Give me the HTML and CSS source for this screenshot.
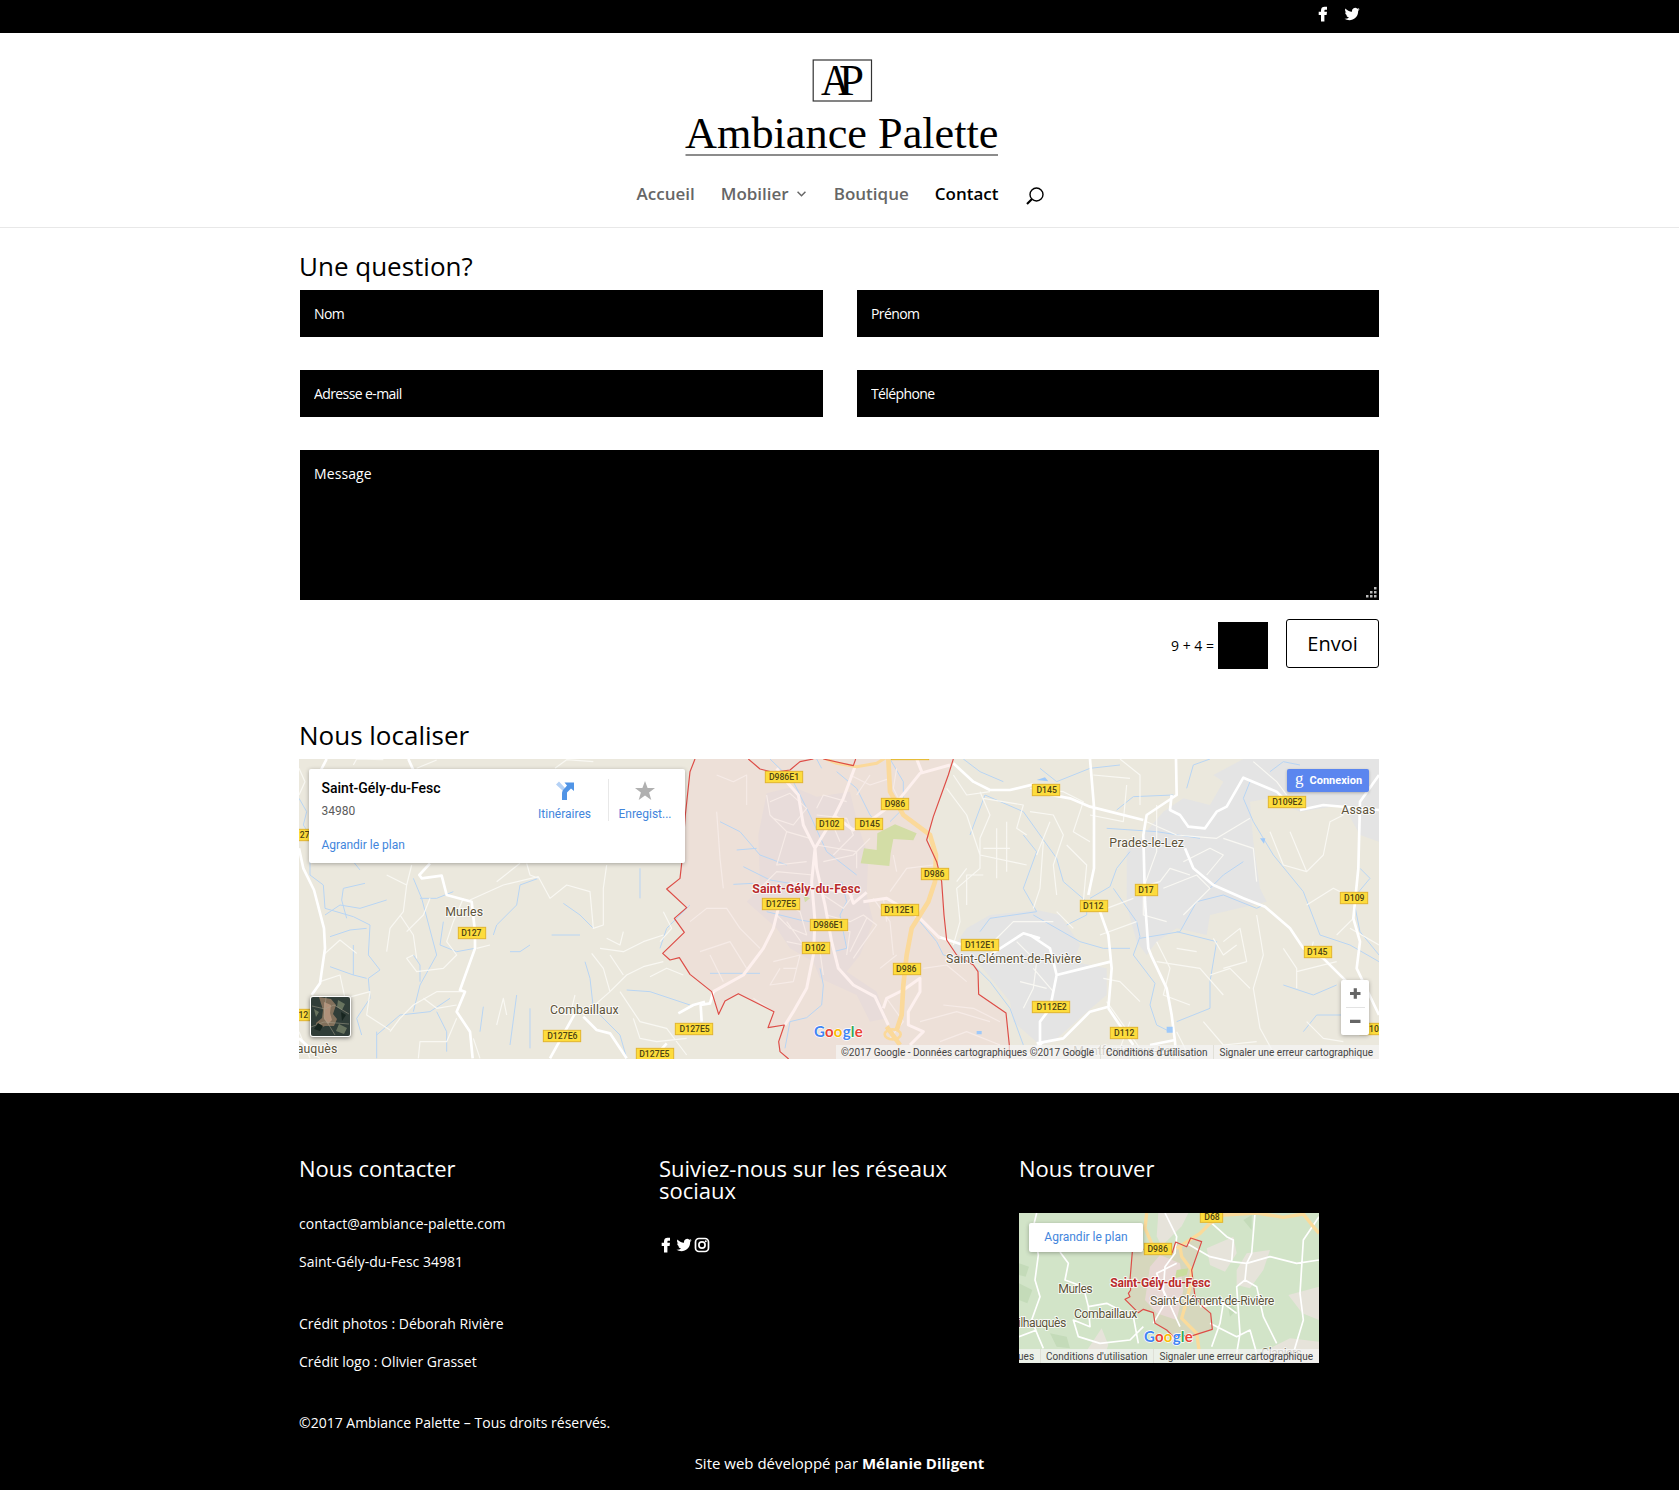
FILE: index.html
```html
<!DOCTYPE html>
<html lang="fr">
<head>
<meta charset="utf-8">
<title>Contact | Ambiance Palette</title>
<link rel="stylesheet" href="styles.css">
</head>
<body>
<svg class="defs" aria-hidden="true">
  <symbol id="facebook" viewBox="0 0 16 16"><path d="M6 15.500V9H3.700V5.800H6V4.200C6 1.800 7.500.7 9.500.7h2.500v3.100h-1.600c-.8 0-1 .4-1 1.100v.9H12L11.600 9H9.400v6.500z"/></symbol>
  <symbol id="twitter" viewBox="0 0 24 24"><path d="M23.600 4.900c-.8.400-1.700.6-2.700.8 1-.6 1.700-1.500 2-2.600-.9.500-1.900.9-2.900 1.100a4.700 4.700 0 0 0-8 4.300C8 8.300 4.500 6.400 2.200 3.600c-1.200 2.100-.6 4.800 1.500 6.200-.8 0-1.500-.2-2.100-.6 0 2.300 1.600 4.300 3.800 4.700-.7.200-1.400.2-2.100.1.600 1.900 2.300 3.200 4.400 3.200A9.500 9.500 0 0 1 .7 19.200c7.600 4.600 20.600 1.600 20.600-11.900.9-.7 1.700-1.500 2.300-2.400z"/></symbol>
  <symbol id="instagram" viewBox="0 0 16 16"><rect x="1.500" y="1.500" width="13" height="13" rx="3.500" fill="none" stroke="currentColor" stroke-width="1.700"/><circle cx="8" cy="8" r="3.100" fill="none" stroke="currentColor" stroke-width="1.700"/><circle cx="11.800" cy="4.200" r="1"/></symbol>
</svg>

<div class="topbar"><div class="topbar-icons">
  <svg class="social"><use href="#facebook"/></svg>
  <svg class="social"><use href="#twitter"/></svg>
</div></div>

<header class="header">
  <svg class="logo" width="320" height="104" viewBox="682 56 320 104">
    <rect x="813.200" y="60" width="58.300" height="41" fill="none" stroke="#333" stroke-width="1.200"/>
    <text class="logo-text" x="821" y="95.300" font-size="45" textLength="29" lengthAdjust="spacingAndGlyphs">A</text>
    <text class="logo-text" x="839" y="95.300" font-size="45" textLength="25" lengthAdjust="spacingAndGlyphs">P</text>
    <text class="logo-text" x="685" y="148" font-size="45" textLength="313.500" lengthAdjust="spacingAndGlyphs">Ambiance Palette</text>
    <path d="M685.500 155h312.500" stroke="#666" stroke-width="1.700"/>
  </svg>
  <nav class="nav">
    <a>Accueil</a>
    <a>Mobilier<svg class="chevron" viewBox="0 0 8 5"><path d="M.5.5 4 4 7.500.5" fill="none" stroke="#666" stroke-width="1.300"/></svg></a>
    <a>Boutique</a>
    <a class="active">Contact</a>
    <svg class="search" viewBox="0 0 18 18"><g fill="none" stroke="#000"><circle cx="10.500" cy="7.500" r="6.500" stroke-width="1.400"/><path d="M6 12 1 17" stroke-width="2.200"/></g></svg>
  </nav>
</header>

<main class="container">
  <h1 class="title">Une question?</h1>
  <form class="form">
    <input class="field" type="text" placeholder="Nom">
    <input class="field" type="text" placeholder="Prénom">
    <input class="field" type="text" placeholder="Adresse e-mail">
    <input class="field" type="text" placeholder="Téléphone">
    <div class="message">
      <textarea class="field area" placeholder="Message"></textarea>
      <svg class="grip" viewBox="0 0 11 11"><path d="M8 0h2.500v2.500H8zM4 4h2.500v2.500H4zM8 4h2.500v2.500H8zM0 8h2.500v2.500H0zM4 8h2.500v2.500H4zM8 8h2.500v2.500H8z"/></svg>
    </div>
    <div class="submit-row">
      <span class="sum">9 + 4 =</span>
      <input class="captcha" type="text" aria-label="Captcha">
      <button class="submit" type="button">Envoi</button>
    </div>
  </form>

  <h1 class="title locate">Nous localiser</h1>
  <section class="map">
    <svg class="map-art" viewBox="0 0 1080 300">
      <g transform="translate(391 -4) scale(.333333)">
        <!-- built-up areas -->
        <g fill="#e4e4e4">
          <path d="M830 520 900 480 1040 465 1110 480 1170 570 1150 620 1250 640 1250 720 1180 780 1090 860 1050 870 970 800 960 740 870 630 780 590z"/>
          <path d="M1310 290 1360 240 1420 170 1480 130 1560 150 1600 80 1570 60 1660 12H2067V140L2067 260 2010 240 1960 150 1830 170 1740 130 1680 140 1690 260 1710 400 1730 440 1560 480 1550 540 1460 520 1400 560 1370 600 1340 560 1310 450z"/>
        </g>
        <!-- commune -->
        <path fill="#ede0d8" d="M15 12 0 50-14 180-25 325-30 370-70 402-10 458-47 490-17 532-82 595-60 615-32 608 0 658 65 710 86 778 105 738 145 716 252 770 234 818 283 810 266 860 270 890 296 912H958L958 870 948 774 866 718 864 650 850 630 800 600 770 555 762 480 755 380 740 320 710 255 730 185 775 60 790 12z"/>
        <path fill="#e8dcda" d="M230 115 310 95 380 125 480 110 505 215 535 300 530 420 550 500 510 600 470 650 560 710 590 790 540 800 500 720 390 670 370 620 300 580 260 520 170 440 210 400 205 240z"/>
        <path fill="#d3dda6" d="M512 325 522 280 560 285 562 235 615 208 680 235 670 256 610 252 602 295 598 333zM340 420l20 10-15 12z"/>
        <!-- streams -->
        <g class="stream">
          <path d="M240 12 310 80 360 180 410 290 500 360M90 200 150 230 210 300 290 330M140 285 200 280M160 335 240 375 300 385M130 388 190 385M60 655 210 655M230 470 330 495 360 500M390 640 400 690 395 750 350 788 300 800 285 880M440 50 500 100 540 180 570 215M600 12 640 80 640 160 600 200M455 380 470 440 450 480 470 580 430 590M380 12 395 40M690 500 740 560 760 600 840 620 900 680 960 760 1000 870"/>
          <path d="M820 12 870 50 940 80M840 240 885 120 1000 170 1100 310 1120 380 1190 440 1190 480 1130 510M1000 240 1040 290 1000 400 1040 470 900 490 870 530"/>
          <path d="M1200 430 1260 395 1280 340 1320 290M1270 400 1340 500 1350 545 1330 600 1395 685 1380 750 1400 810 1440 830M1350 550 1470 530 1520 440 1600 420 1700 460 1720 450M1460 530 1580 560 1560 680 1560 760 1460 800M1030 480 1170 560 1240 580 1320 580M1050 40 1100 80 1200 40 1290 30M1280 165 1330 125 1450 120M1250 220 1400 230 1530 250M1490 100 1510 30 1560 12M1680 80 1660 130 1690 200 1750 300 1840 410 1890 540 1980 570 2067 620M1560 400 1600 360 1660 320M1740 50 1780 20 1830 30M2067 600 2010 530 1990 430 2040 370 2010 340M1780 690 1870 720 1940 690M1840 830 1880 780 1970 780"/>
        </g>
        <g class="stream" transform="translate(-1200 -120)">
          <path d="M27 250 50 290 40 330 60 360 60 480 100 510 105 580 190 605 240 630 235 720 270 765 235 790 240 850 200 910 215 960M170 610 155 555 160 520 225 505M105 600 150 570 210 580 290 555M120 665 180 645 230 640M120 755 190 780 230 790M190 780 190 690M370 490 395 550 440 720 390 810 370 890M390 550 440 550 490 530M370 720 390 750 390 800M460 620 450 690 500 710 555 700M260 960 330 900 420 890 480 850M440 890 470 950 470 1010M610 660 620 630 680 570 690 510 745 490M820 565 870 600 910 640M785 660 870 660M660 710 690 710 720 690M885 740 900 790 910 880 990 960 1010 1030M1010 825 1080 830 1200 870M1050 460 1050 550M1200 570 1130 640 1110 700M570 950 580 875M660 990 680 840M720 1000 720 880M260 950 260 1030M190 440 210 465"/>
        </g>
        <!-- minor roads -->
        <g class="lane" transform="translate(-1200 -120)">
          <path d="M27 160 45 200 27 240M190 150 200 132 280 134M380 160 440 135M795 160 830 134 910 140M365 450 350 510 290 480M350 510 340 590 300 640 290 710M330 600 370 660 380 730M420 550 400 600 350 650M100 720 150 675 200 715M90 800 150 780 165 850 240 830 230 900 300 945M300 950 330 910 370 870 440 830 520 830M385 1030 390 980 470 980 500 910M540 555 640 510 745 485 780 550 830 510 900 530 910 640 940 630 940 520 950 450M710 445 720 480 745 490M690 445 620 500M520 550 490 620 470 680 500 720 460 760 380 770 350 730 370 720M560 700 600 690M880 900 960 830 1010 780 1060 755 1120 740M960 830 940 760 905 715M930 700 1000 710 1060 680 1120 660M1000 780 960 720M1030 910 1050 970 1100 980 1190 970M990 830 1050 920 1130 940 1190 1020M1080 785 1130 760 1180 780M855 840 840 900M400 850 440 880 500 870M570 1030 550 970M620 930 640 850 650 900M1000 650 990 690 950 670M1120 590 1145 640 1110 680M830 900 780 880M27 950 60 1030M90 1030 40 1000"/>
        </g>
        <g class="lane">
          <path d="M870 110 900 180 870 250 870 340 800 400 810 500 790 570M880 130 1000 150 980 220 1010 240M790 60 830 120 900 110M920 220 920 370M950 200 950 350M870 300 1010 330M770 100 830 180 870 300M800 380 830 340M830 450 830 360 880 360M880 280 960 280"/>
          <path d="M1020 100 1120 110 1180 140 1150 230 1200 260M1020 170 1090 180 1120 240 1090 330 1100 420M1040 300 1080 200M1130 270 1190 330 1180 440M1060 260 1050 400 1030 460M1200 180 1300 200 1310 90M1210 60 1320 70M1290 12 1350 60 1350 150M1340 400 1410 380 1440 340 1500 360M1370 200 1460 240 1580 250 1680 190M1400 150 1400 290 1360 400 1360 480 1430 500M1480 320 1560 280 1600 300 1550 360M1420 400 1520 360 1560 400 1480 480M1600 250 1690 280 1700 380M1250 460 1330 430M1230 540 1340 500M1400 560 1440 640 1420 720 1500 750M1400 620 1530 640 1600 720M1560 660 1620 640 1680 700M1600 560 1650 520 1670 620 1600 640M1700 480 1720 600 1690 700 1710 820 1760 910M1740 230 1780 330 1850 350M1690 20 1760 80 1790 120M1800 230 1850 350 1900 300 1920 200 1960 180M1850 450 1930 400 1970 420M1780 580 1820 640 1820 700M1820 650 1940 620M1870 560 1860 600M1940 540 1990 490M1350 740 1290 680 1240 670M1320 800 1290 880M1460 830 1500 910M1540 800 1600 870 1700 860M1250 740 1350 880M1570 550 1600 600 1640 570M1460 580 1520 590M1980 520 2067 570M1850 800 1900 850 1960 860"/>
          <path d="M980 560 1040 620 1030 700 1000 760M1100 470 1150 520M1030 640 1090 710M990 680 1070 700M900 570 970 500 1090 500"/>
        </g>
        <g class="lane pink">
          <path d="M80 60 130 80 170 60 170 150M80 170 90 310 100 400M0 500 50 460 110 460 150 520 210 580M30 590 120 560 170 640M60 600 100 680M230 120 240 180 290 230 360 250M240 140 300 115 350 160 310 210 250 190M290 230 260 330 350 320M380 160 400 120 470 140M380 180 470 190 490 240 430 300M400 320 490 300 540 250M380 270 500 290 500 340M420 190 450 260M210 400 260 350 370 360M280 440 330 470 350 540 300 520 260 480M290 500 340 570 290 560M370 400 300 380M400 420 460 460 490 420M410 480 480 500 520 480 560 510 510 580 490 610M530 490 480 590M420 520 480 530 470 600M550 430 600 500 610 600M580 430 590 500M620 40 610 100 630 140M540 60 500 120M480 60 540 90 600 70M600 410 650 340 730 330M610 300 620 350M250 620 330 600 310 680 240 690 270 640M280 640 320 640M390 590 400 660M190 730 250 770M590 730 640 800 600 850M700 640 770 630 830 680M760 750 850 760 930 800M690 800 800 770 900 800M750 860 830 830 930 870M570 640 620 600"/>
        </g>
        <!-- main roads -->
        <g class="road">
          <g transform="translate(-1200 -120)"><path d="M110 132 85 180M27 400 40 460 72 525 102 640 105 700 90 805 65 840M355 132 370 165M420 445 388 480 395 490 455 482 470 540 545 560 555 650 555 700 510 825 525 830 500 890 540 950 548 1030M855 895 780 1030M880 905 920 945 960 955 1010 1030M27 970 60 1000M1130 985 1090 1030M1245 860 1210 870 1165 895"/></g>
          <path d="M790 25 850 80 900 105 960 105 1030 88M1030 110 1140 130 1200 155 1360 195M1200 12 1212 155 1212 340 1195 420M1458 12 1460 120 1370 180 1360 240 1365 440 1375 580 1385 605 1430 700 1445 780 1455 860 1458 910M1445 120 1440 165 1470 180 1495 215 1545 220 1580 170 1610 155 1660 68 1760 110 1790 140M1830 165 1900 150 2067 165M2067 60 2010 140 2005 340 1990 490 2010 560 2000 640 2067 780M1485 280 1510 340 1570 390 1660 430 1725 455 1800 520 1840 580 1900 610 1970 680M1230 470 1255 540 1265 640 1255 760M1262 620 1180 640 1100 660M1020 540 1080 580 1100 660 1080 760 1050 800 1050 912M1255 760 1330 870M1255 755 1200 770 1120 850 1040 865"/>
          <path d="M745 545 820 570M900 600 1000 535 1050 550M1380 870 1455 855M1000 912 1060 860"/>
        </g>
        <g class="road pink">
          <path d="M260 40 290 80 325 120 340 210 375 280 380 340 405 450 425 560 445 640 490 690 555 725 595 810M495 35 460 130 430 190 375 280 365 380 375 500 370 600 350 700 310 770 285 810M430 180 490 225 550 190 630 130 690 55 780 30M680 12 695 50M520 440 590 430 690 490 750 550M270 440 250 520 220 580 160 660 70 710M400 400 480 415 490 445 530 412M580 760 590 730 640 705 690 670 690 710 655 770 655 810 700 830 660 870"/>
        </g>
        <path class="road" d="M70 710 60 745 32 750 35 800"/>
        <g fill="none" stroke="#fbd99a" stroke-width="14">
          <path d="M595 12 600 110 640 180 720 240 738 300 735 380 715 440 665 520 650 600 640 690 635 780 620 825M590 815 630 870"/>
          <path d="M380 0 440 25 500 35 560 25 600 0" stroke-width="9"/><ellipse cx="608" cy="838" rx="24" ry="15" stroke-width="8"/>
        </g>
        <g class="border"><path d="M15 12 0 50-14 180-25 325-30 370-70 402-10 458-47 490-17 532-82 595-60 615-32 608 0 658 65 710 86 778 105 738 145 716 252 770 234 818 283 810 266 860 270 890 296 912M958 912V870L948 774 866 718 864 650 850 630 800 600 770 555 762 480 755 380 740 320 710 255 730 185 775 60 790 12M497 12 490 32 400 12M175 12 210 42 250 52 300 45 330 20 370 12"/></g>
        <g fill="#9ec9fa"><path d="M1710 250h16l-4 16zM1430 815h18v18h-18zM860 828h15v10h-15zM1040 75l25-8 10 12z"/></g>
        <!-- road shields -->
        <g class="shields">
          <g><rect x="226" y="49" width="112" height="34"/><rect x="574" y="130" width="82" height="34"/><rect x="379" y="190" width="82" height="34"/><rect x="496" y="190" width="82" height="34"/><rect x="694" y="340" width="82" height="34"/><rect x="217" y="430" width="112" height="34"/><rect x="574" y="448" width="112" height="34"/><rect x="361" y="493" width="112" height="34"/><rect x="337" y="562" width="82" height="34"/><rect x="610" y="625" width="82" height="34"/><rect x="814" y="553" width="112" height="34"/><rect x="1027" y="88" width="82" height="34"/><rect x="1735" y="124" width="112" height="34"/><rect x="1336" y="388" width="67" height="34"/><rect x="1171" y="436" width="82" height="34"/><rect x="1951" y="412" width="82" height="34"/><rect x="1843" y="574" width="82" height="34"/><rect x="1027" y="739" width="112" height="34"/><rect x="1261" y="817" width="82" height="34"/><rect x="2010" y="805" width="82" height="34"/><rect x="-695" y="517" width="82" height="34"/><rect x="-440" y="826" width="112" height="34"/><rect x="-44" y="805" width="112" height="34"/><rect x="-161" y="880" width="112" height="34"/><rect x="-1205" y="223" width="70" height="34"/><rect x="-1205" y="763" width="70" height="34"/><rect x="604" y="-18" width="112" height="32"/></g>
          <text x="282" y="76">D986E1</text><text x="615" y="157">D986</text><text x="418" y="217">D102</text><text x="539" y="217">D145</text><text x="733" y="367">D986</text><text x="273" y="457">D127E5</text><text x="628" y="475">D112E1</text><text x="415" y="520">D986E1</text><text x="376" y="589">D102</text><text x="649" y="652">D986</text><text x="870" y="580">D112E1</text><text x="1070" y="115">D145</text><text x="1792" y="151">D109E2</text><text x="1368" y="415">D17</text><text x="1210" y="463">D112</text><text x="1993" y="439">D109</text><text x="1882" y="601">D145</text><text x="1085" y="766">D112E2</text><text x="1303" y="844">D112</text><text x="2052" y="832">10</text><text x="-656" y="544">D127</text><text x="-383" y="853">D127E6</text><text x="14" y="832">D127E5</text><text x="-107" y="907">D127E5</text><text x="-1156" y="250">27</text><text x="-1160" y="790">12</text>
        </g>
        <g class="places">
          <text x="-734" y="484" textLength="113">Murles</text><text x="-420" y="778" textLength="206">Combaillaux</text><text x="-1180" y="894" textLength="122">auquès</text><text x="768" y="625" textLength="406">Saint-Clément-de-Rivière</text><text x="1258" y="275" textLength="224">Prades-le-Lez</text><text x="1954" y="178" textLength="102">Assas</text><text class="faded" x="1150" y="901" textLength="310">Montferrier-sur-Lez</text>
          <text class="commune" x="187" y="415" textLength="324">Saint-Gély-du-Fesc</text>
        </g>
        <text class="google" x="372" y="846" font-size="45" textLength="146"><tspan fill="#4285f4">G</tspan><tspan fill="#ea4335">o</tspan><tspan fill="#fbbc05">o</tspan><tspan fill="#4285f4">g</tspan><tspan fill="#34a853">l</tspan><tspan fill="#ea4335">e</tspan></text>
      </g>
    </svg>
    <div class="place-card">
      <div class="place-info"><strong>Saint-Gély-du-Fesc</strong><span>34980</span><a>Agrandir le plan</a></div>
      <div class="place-action"><svg viewBox="0 0 20 20"><path d="M1 3.500 4 .500 10 7v5L7.500 9.500z" fill="#b4d1f5"/><path d="M7 19v-6.500c0-2.500 1-3.500 2.500-5L12 4.500 9.500 1.500H19V10l-3-2.500-4 4V19z" fill="#5094e6"/></svg><a>Itinéraires</a></div>
      <div class="place-action second"><svg viewBox="0 0 20 20"><path d="m10 0 2.600 7H20l-5.900 4.500L16.300 19 10 14.500 3.700 19l2.200-7.500L0 7h7.400z" fill="#b0b0b0"/></svg><a>Enregist...</a></div>
    </div>
    <div class="connect"><span class="connect-g">g</span>Connexion</div>
    <svg class="satellite" viewBox="0 0 39 39"><rect width="39" height="39" fill="#303d38"/><path d="M8 0 20 2 25 8 22 17 26 22 23 29 14 29 7 32 5 26 11 21 12 13z" fill="#82705b"/><path d="M13 5 20 8 19 16 21 23 17 27 13 22z" fill="#b0917a"/><path d="M27 3 34 7 31 13 26 10zM28 27l8 4-3 6-8-3zM3 12l5 3-3 5z" fill="#68735e"/><path d="m1 9 13 3 9-4 15 9M15 0 13 20 24 38M0 30l13-5 25 2" fill="none" stroke="#a8a38e" stroke-width=".8" opacity=".65"/><path d="m7 26 5 3-3 5-6-2zM30 15l5 3-4 6z" fill="#17251f"/></svg>
    <div class="zoom"><svg viewBox="0 0 28 55"><path d="M9 13.500h10.500M14.300 8.300v10.400M9 41.300h10.500" stroke="#666" stroke-width="3.200"/><path d="M5 27.500h19" stroke="#e3e3e3"/></svg></div>
    <div class="legal"><span>©2017 Google - Données cartographiques ©2017 Google</span><span>Conditions d'utilisation</span><span>Signaler une erreur cartographique</span></div>
  </section>
</main>

<footer class="footer">
  <div class="footer-grid">
    <section>
      <h4>Nous contacter</h4>
      <p>contact@ambiance-palette.com</p>
      <p>Saint-Gély-du-Fesc 34981</p>
      <p class="spaced">Crédit photos : Déborah Rivière</p>
      <p>Crédit logo : Olivier Grasset</p>
      <p class="spaced last">©2017 Ambiance Palette – Tous droits réservés.</p>
    </section>
    <section>
      <h4>Suiviez-nous sur les réseaux sociaux</h4>
      <div class="footer-social"><svg class="social"><use href="#facebook"/></svg><svg class="social"><use href="#twitter"/></svg><svg class="social"><use href="#instagram"/></svg></div>
    </section>
    <section>
      <h4>Nous trouver</h4>
      <div class="mini-map">
        <svg class="map-art" viewBox="0 0 300 150">
          <g transform="translate(-9 -73) scale(.333333)">
            <path fill="#d2e4c8" d="M0 200h960v500H0z"/>
            <g fill="#e6e3da"><path d="M445 219h90l-20 40-60 60-15-30zM590 325l80-35 10 50-35 55-45-20zM680 390l30-50 70-10-20 60-40 55-40-10zM835 465l92-25v100l-50-20zM225 640l50-75 20 50-20 54h-60zM750 640l90-45 87 10v64H740z"/></g>
            <path fill="#d6d7bd" d="M367 335 360 420 362 450 355 460 360 470 345 478 385 518 400 508 430 518 435 550 470 570 490 590 550 586 607 568 602 520 578 500 555 470 545 390 575 305 542 294 530 320 497 306 486 340z"/>
            <path fill="#e7d8d4" d="M420 380 450 345 510 370 520 450 500 540 440 520 405 480z"/><path fill="#c9dc9d" d="m500 390 35-5-5 20-35 10z"/>
            <g fill="#c4dbb9"><path d="M27 370l30 10-10 30-20-5zM27 430l40 20-15 40-25-10zM120 580l50 10 10 35-40-5zM650 480l30 30-20 20zM700 240l25-15v45z"/></g>
            <g class="road mini"><path d="M80 219 70 260 85 345 75 420 90 470 65 540 85 590 100 625M150 336 175 370 165 420 220 440 235 500 290 490 370 530M235 500 240 560 190 540 205 590 270 610 360 600 400 560M370 530 385 610M465 219 500 290 495 340 465 380 460 450 510 560M735 219 725 340 710 370 705 420 740 440 760 530 800 610M600 245 650 290 670 300 665 365 600 350 530 310M665 365 710 370 780 350 860 370 927 360M927 230 880 300 870 460 880 540 850 640M705 420 680 440 690 580 680 640M570 500 640 490 630 550 605 620M640 490 680 520M600 550 680 590 720 570 740 640M27 590 80 570M500 370 440 400 470 480 430 550M470 480 560 470"/></g>
            <g fill="none" stroke="#fadb9b" stroke-width="10"><path d="M410 219 405 265 425 310M500 325 570 280 600 250 640 225 740 219 820 232 880 222 910 260 927 280M510 320 515 350 545 390 540 440 525 500 515 535 560 580 570 650"/></g>
            <path class="border" d="M400 328H385M367 335 360 420 362 450 355 460 360 470 345 478 385 518 400 508 430 518 435 550 470 570 490 590 550 586 607 568 602 520 578 500 555 470 545 390 575 305 542 294 530 320 497 306 486 340"/>
            <g class="shields"><g><rect x="571" y="213" width="67" height="34"/><rect x="403" y="310" width="82" height="34"/></g><text x="606" y="241">D68</text><text x="443" y="337">D986</text></g>
            <g class="places"><text x="145" y="459" textLength="103">Murles</text><text x="192" y="534" textLength="190">Combaillaux</text><text x="24" y="561" textLength="145">ilhauquès</text><text x="420" y="495" textLength="373">Saint-Clément-de-Rivière</text><text class="faded" x="754" y="650" textLength="122">Clapiers</text><text class="commune" x="301" y="440" textLength="300">Saint-Gély-du-Fesc</text></g>
            <text class="google" x="402" y="605" font-size="45" textLength="146"><tspan fill="#4285f4">G</tspan><tspan fill="#ea4335">o</tspan><tspan fill="#fbbc05">o</tspan><tspan fill="#4285f4">g</tspan><tspan fill="#34a853">l</tspan><tspan fill="#ea4335">e</tspan></text>
          </g>
        </svg>
        <a class="enlarge">Agrandir le plan</a>
        <div class="legal"><span>ues</span><span>Conditions d'utilisation</span><span>Signaler une erreur cartographique</span></div>
      </div>
    </section>
  </div>
  <p class="credit">Site web développé par <strong>Mélanie Diligent</strong></p>
</footer>
</body>
</html>
```
FILE: styles.css
```css
* { box-sizing: border-box; }
body { margin: 0; background: #fff; color: #000; font: 14px/24px "Open Sans", sans-serif; }
h1, h4, p { margin: 0; font-weight: 400; }
.defs { position: absolute; width: 0; height: 0; }
.social { width: 16px; height: 16px; fill: currentColor; color: #fff; }

.topbar { height: 33px; background: #000; }
.topbar-icons { width: 1080px; margin: 0 auto; padding: 6px 20px 0 0; display: flex; justify-content: flex-end; gap: 13px; }

.header { height: 195px; border-bottom: 1px solid #e8e8e8; padding-top: 23px; display: flex; flex-direction: column; align-items: center; }
.logo { display: block; margin-left: 5px; }
.logo-text { font-family: "Liberation Serif", serif; fill: #000; }
.nav { display: flex; gap: 26px; margin: 22px 0 0 2px; font-size: 17px; font-weight: 600; line-height: 24px; color: #666; align-items: center; }
.nav .active { color: #000; }
.chevron { width: 9px; height: 6px; margin: 0 2px 3px 8px; }
.search { width: 18px; height: 18px; margin: 3px 0 0 2px; }

.container { width: 1081px; margin: 0 auto; padding-top: 25px; }
.title { font-size: 26px; line-height: 26px; height: 37px; }
.form { width: 1079px; margin-left: 1px; display: grid; grid-template-columns: 523px 522px; column-gap: 34px; row-gap: 33px; }
.field { display: block; width: 100%; height: 47px; padding: 0 14px; border: 0; border-radius: 0; background: #000; color: #fff; font: 14px "Open Sans", sans-serif; letter-spacing: -.6px; }
.field::placeholder { color: #fff; opacity: 1; }
.message { grid-column: 1 / 3; position: relative; }
.area { height: 150px; padding: 14px; resize: none; letter-spacing: .1px; }
.grip { position: absolute; right: 2px; bottom: 2px; width: 11px; height: 11px; fill: #bbb; }
.submit-row { grid-column: 1 / 3; display: flex; justify-content: flex-end; margin-top: -14px; height: 50px; }
.sum { margin: 15px 4px 0 0; }
.captcha { width: 50px; height: 47px; margin: 3px 18px 0 0; border: 0; background: #000; }
.submit { width: 93px; height: 49px; padding: 0; border: 1.500px solid #000; border-radius: 3px; background: #fff; color: #000; font: 20px "Open Sans", sans-serif; }
.locate { margin-top: 53px; }

.map { position: relative; width: 1080px; height: 300px; overflow: hidden; background: #ebe8dd; font-family: Roboto, sans-serif; }
.map-art { display: block; width: 100%; height: 100%; }
.stream, .lane, .road, .border { fill: none; stroke-linejoin: round; }
.stream { stroke: #b8d5f4; stroke-width: 3; }
.lane { stroke: #f9f8f3; stroke-width: 3.500; }
.lane.pink { stroke: #f6ebe7; }
.road { stroke: #fff; stroke-width: 8; }
.road.pink { stroke: #fdf0ee; stroke-width: 9; }
.road.mini { stroke-width: 5; }
.border { stroke: #dd4c46; stroke-width: 3.500; }
.shields rect { fill: #fddc3c; stroke: #e3b52e; stroke-width: 3; }
.shields text { font: 500 26px Roboto, sans-serif; fill: #4d4313; text-anchor: middle; }
.places text { font: 37px Roboto, sans-serif; fill: #5d533a; stroke: #fff; stroke-opacity: .8; stroke-width: 6; paint-order: stroke; stroke-linejoin: round; }
.places .commune { font-weight: 700; fill: #b92c2c; }
.places .faded { opacity: .75; }
.google { font-family: Lato, sans-serif; font-weight: 700; stroke: #fff; stroke-width: 4; paint-order: stroke; }

.place-card { position: absolute; left: 10px; top: 10px; width: 376px; height: 94px; padding-left: 12.500px; display: flex; background: #fff; border-radius: 2px; box-shadow: 0 1px 4px rgba(0,0,0,.3); font-size: 12px; line-height: 16px; }
.place-info { width: 203px; display: flex; flex-direction: column; padding-top: 11px; color: #5b5b5b; }
.place-info strong { color: #000; font-size: 14px; font-weight: 500; margin-bottom: 7px; }
.place-info a { margin-top: 18px; }
.place-card a, .enlarge { color: #4285dc; }
.place-action { width: 80px; height: 42px; margin-top: 10px; display: flex; flex-direction: column; align-items: center; }
.place-action svg { width: 20px; height: 20px; margin: 2px 0 5px; flex: none; }
.place-action.second { width: 74px; margin-left: 3px; border-left: 1px solid #e8e8e8; }
.connect { position: absolute; left: 988px; top: 10px; width: 82px; height: 23px; display: flex; align-items: center; gap: 6px; padding-left: 8px; background: #5b86ef; color: #fff; border-radius: 2px; font-size: 11px; font-weight: 700; box-shadow: 0 1px 3px rgba(0,0,0,.25); }
.connect-g { font: 17px/15px "Liberation Serif", serif; margin-top: -5px; }
.satellite { position: absolute; left: 11px; top: 237px; width: 41px; height: 41px; border: 1.500px solid #fff; border-radius: 3px; box-shadow: 0 1px 4px rgba(0,0,0,.5); }
.zoom { position: absolute; left: 1042px; top: 221px; width: 28px; height: 55px; background: #fff; border-radius: 2px; box-shadow: 0 1px 4px rgba(0,0,0,.3); }
.zoom svg { display: block; }
.legal { position: absolute; right: 0; bottom: 0; height: 14px; display: flex; background: rgba(245,245,245,.7); color: #444; font: 10px/16px Roboto, sans-serif; white-space: nowrap; }
.legal span { padding: 0 6px 0 5px; }
.legal span + span { border-left: 1px solid rgba(220,220,210,.8); }

.footer { margin-top: 34px; height: 397px; background: #000; color: #fff; }
.footer-grid { width: 1081px; height: 349px; margin: 0 auto; padding-top: 64px; display: grid; grid-template-columns: 300px 300px 300px; column-gap: 60px; }
.footer h4 { font-size: 22px; line-height: 22px; padding-bottom: 34px; }
.footer p { line-height: 24px; margin-bottom: 14px; white-space: nowrap; }
.footer-grid p:nth-of-type(1) { margin-top: -1px; }
.footer .spaced { margin-top: 38px; }
.footer .last { margin-top: 37px; }
.footer-social { display: flex; gap: 2px; margin: 2px 0 0 -1px; }
.mini-map { position: relative; width: 300px; height: 150px; overflow: hidden; }
.enlarge { position: absolute; left: 10px; top: 10px; width: 114px; height: 29px; background: #fff; border-radius: 2px; text-align: center; font: 12px/29px Roboto, sans-serif; box-shadow: 0 1px 4px rgba(0,0,0,.3); }
.footer .credit { text-align: center; font-size: 15px; margin: 9px 0 0; }
```
